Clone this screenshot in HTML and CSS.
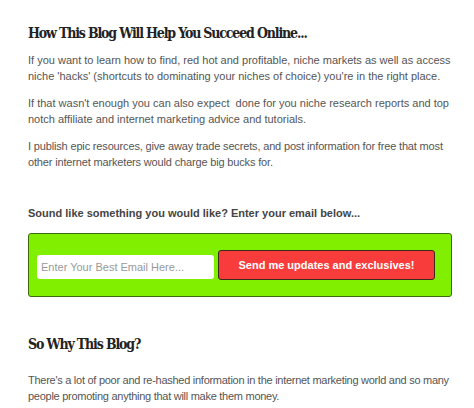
FILE: index.html
```html
<!DOCTYPE html>
<html>
<head>
<meta charset="utf-8">
<link rel="stylesheet" href="styles.css">
</head>
<body>
<div class="page">
  <h2 class="title">How This Blog Will Help You Succeed Online...</h2>
  <p class="text">If you want to learn how to find, red hot and profitable, niche markets as well as access<br>niche 'hacks' (shortcuts to dominating your niches of choice) you're in the right place.</p>
  <p class="text">If that wasn't enough you can also expect &nbsp;done for you niche research reports and top<br>notch affiliate and internet marketing advice and tutorials.</p>
  <p class="text tight">I publish epic resources, give away trade secrets, and post information for free that most<br>other internet marketers would charge big bucks for.</p>
  <p class="label">Sound like something you would like? Enter your email below...</p>
  <form class="optin">
    <input class="email" type="text" placeholder="Enter Your Best Email Here...">
    <button class="submit" type="button">Send me updates and exclusives!</button>
  </form>
  <h2 class="title second">So Why This Blog?</h2>
  <p class="text tighter">There's a lot of poor and re-hashed information in the internet marketing world and so many<br>people promoting anything that will make them money.</p>
</div>
</body>
</html>
```
FILE: styles.css
```css
html, body {
  margin: 0;
  padding: 0;
  background: #ffffff;
}
.page {
  width: 440px;
  padding: 24px 0 0 28px;
  font-family: "Liberation Sans", Arial, sans-serif;
}
.title {
  margin: 0 0 10px 0;
  font-family: "DejaVu Serif Condensed", "DejaVu Serif", serif;
  font-stretch: condensed;
  font-weight: bold;
  font-size: 14px;
  letter-spacing: -1.15px;
  line-height: 18px;
  color: #222222;
}
.title.second {
  margin-bottom: 19px;
}
.text {
  margin: 0 0 11px 0;
  font-size: 11px;
  line-height: 16px;
  white-space: nowrap;
  color: #555555;
}
.text.tight {
  letter-spacing: -0.16px;
}
.text.tighter {
  letter-spacing: -0.27px;
}
.label {
  margin: 35px 0 12px 0;
  font-size: 11px;
  font-weight: bold;
  line-height: 16px;
  color: #444444;
}
.optin {
  box-sizing: border-box;
  width: 424px;
  height: 64px;
  margin: 0 0 38px 0;
  padding: 0 16px 0 8px;
  display: flex;
  align-items: center;
  gap: 4px;
  background: #80f000;
  border: 1px solid #3d6a0c;
  border-radius: 3px;
}
.email {
  box-sizing: border-box;
  width: 177px;
  height: 24px;
  margin: 3px 0 0 0;
  padding: 0 4px;
  border: none;
  border-radius: 3px;
  background: #ffffff;
  font-family: "Liberation Sans", Arial, sans-serif;
  font-size: 11px;
  color: #333;
  outline: none;
}
.email::placeholder {
  color: #999999;
}
.submit {
  box-sizing: border-box;
  flex: 1;
  height: 30px;
  border: 1px solid #3a2a1a;
  border-radius: 3px;
  background: #f83c3c;
  color: #ffffff;
  font-family: "Liberation Sans", Arial, sans-serif;
  font-size: 11px;
  font-weight: bold;
  cursor: pointer;
}
```
